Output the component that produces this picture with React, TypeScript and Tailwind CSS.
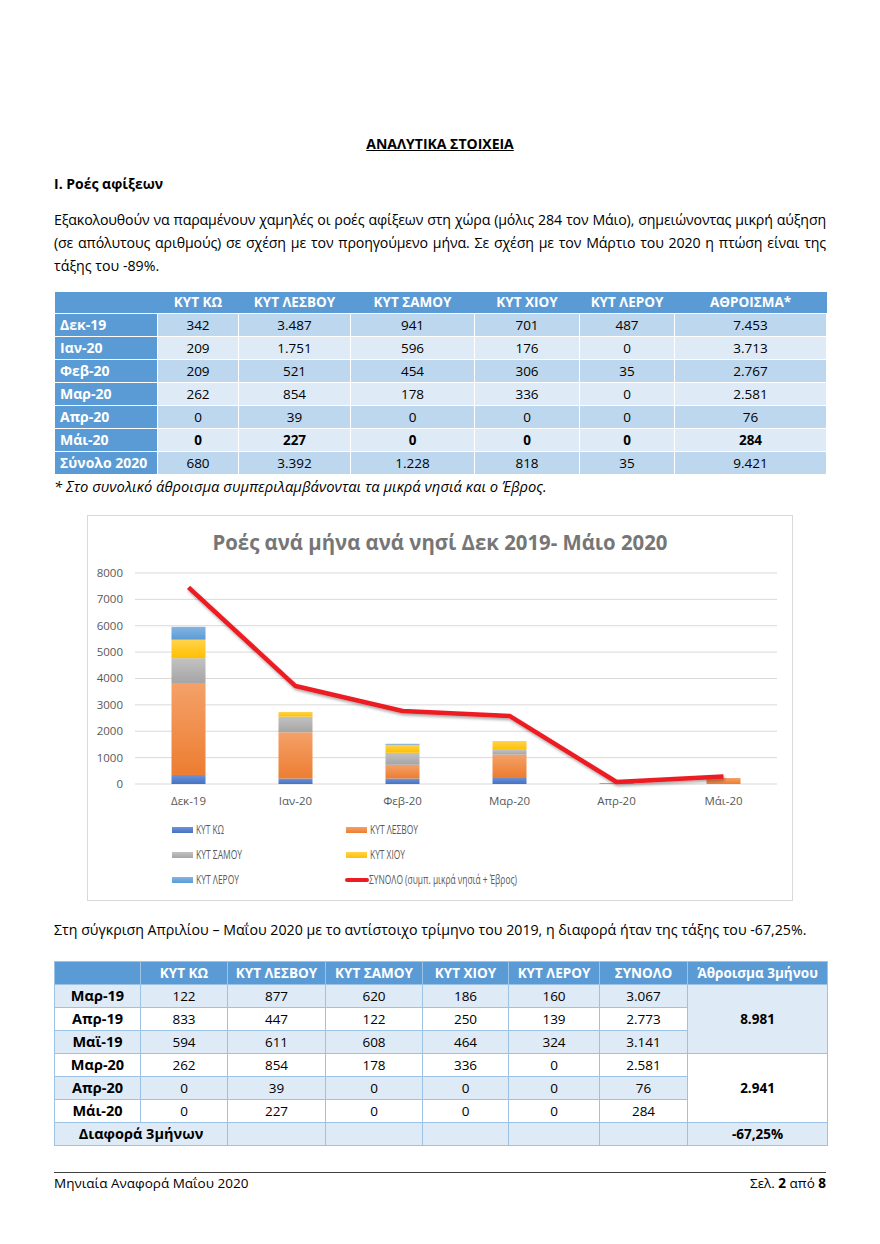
import React from "react";

const FONT = '"Open Sans", "Noto Sans", sans-serif';

const t1Head = ["", "ΚΥΤ ΚΩ", "ΚΥΤ ΛΕΣΒΟΥ", "ΚΥΤ ΣΑΜΟΥ", "ΚΥΤ ΧΙΟΥ", "ΚΥΤ ΛΕΡΟΥ", "ΑΘΡΟΙΣΜΑ*"];
const t1Widths = [103, 81, 112, 124, 105, 95, 152];
const t1Rows: { label: string; vals: string[]; bold?: boolean }[] = [
  { label: "Δεκ-19", vals: ["342", "3.487", "941", "701", "487", "7.453"] },
  { label: "Ιαν-20", vals: ["209", "1.751", "596", "176", "0", "3.713"] },
  { label: "Φεβ-20", vals: ["209", "521", "454", "306", "35", "2.767"] },
  { label: "Μαρ-20", vals: ["262", "854", "178", "336", "0", "2.581"] },
  { label: "Απρ-20", vals: ["0", "39", "0", "0", "0", "76"] },
  { label: "Μάι-20", vals: ["0", "227", "0", "0", "0", "284"], bold: true },
  { label: "Σύνολο 2020", vals: ["680", "3.392", "1.228", "818", "35", "9.421"] },
];

const t2Widths = [86, 87, 98, 97, 86, 91, 88, 140];
const t2Head = ["", "ΚΥΤ ΚΩ", "ΚΥΤ ΛΕΣΒΟΥ", "ΚΥΤ ΣΑΜΟΥ", "ΚΥΤ ΧΙΟΥ", "ΚΥΤ ΛΕΡΟΥ", "ΣΥΝΟΛΟ", "Άθροισμα 3μήνου"];
const t2Rows = [
  { label: "Μαρ-19", vals: ["122", "877", "620", "186", "160", "3.067"] },
  { label: "Απρ-19", vals: ["833", "447", "122", "250", "139", "2.773"] },
  { label: "Μαϊ-19", vals: ["594", "611", "608", "464", "324", "3.141"] },
  { label: "Μαρ-20", vals: ["262", "854", "178", "336", "0", "2.581"] },
  { label: "Απρ-20", vals: ["0", "39", "0", "0", "0", "76"] },
  { label: "Μάι-20", vals: ["0", "227", "0", "0", "0", "284"] },
];

const cats = ["Δεκ-19", "Ιαν-20", "Φεβ-20", "Μαρ-20", "Απρ-20", "Μάι-20"];
const stacks = [
  [342, 3487, 941, 701, 487],
  [209, 1751, 596, 176, 0],
  [209, 521, 454, 306, 35],
  [262, 854, 178, 336, 0],
  [0, 39, 0, 0, 0],
  [0, 227, 0, 0, 0],
];
const totals = [7453, 3713, 2767, 2581, 76, 284];
const colors = ["#4472c4", "#ed7d31", "#a5a5a5", "#ffc000", "#5b9bd5"];
const lights = ["#6f93d6", "#f4a169", "#c2c2c2", "#ffd34d", "#84b5e2"];

function Chart() {
  const y0 = 268;
  const k = 0.02638;
  const yOf = (v: number) => y0 - v * k;
  const cx = (i: number) => 100.5 + 107 * i;
  const grid = [0, 1000, 2000, 3000, 4000, 5000, 6000, 7000, 8000];
  const pts = totals.map((v, i) => `${cx(i)},${yOf(v)}`).join(" ");
  const legend = [
    { x: 84, y: 314, c: 0, label: "ΚΥΤ ΚΩ", w: 28 },
    { x: 258, y: 314, c: 1, label: "ΚΥΤ ΛΕΣΒΟΥ", w: 48 },
    { x: 84, y: 339, c: 2, label: "ΚΥΤ ΣΑΜΟΥ", w: 46 },
    { x: 258, y: 339, c: 3, label: "ΚΥΤ ΧΙΟΥ", w: 35 },
    { x: 84, y: 364, c: 4, label: "ΚΥΤ ΛΕΡΟΥ", w: 43 },
  ];
  return (
    <div className="mx-auto w-[706px] h-[386px] border border-[#d9d9d9] bg-white">
      <svg width="704" height="384" viewBox="0 0 704 384" style={{ fontFamily: FONT }}>
        <defs>
          {colors.map((c, i) => (
            <linearGradient key={i} id={`g${i}`} x1="0" y1="0" x2="0" y2="1">
              <stop offset="0" stopColor={lights[i]} />
              <stop offset="1" stopColor={c} />
            </linearGradient>
          ))}
          <filter id="sh" x="-10%" y="-10%" width="120%" height="130%">
            <feGaussianBlur in="SourceAlpha" stdDeviation="1.5" />
            <feOffset dx="1" dy="2" result="b" />
            <feComponentTransfer>
              <feFuncA type="linear" slope="0.35" />
            </feComponentTransfer>
            <feMerge>
              <feMergeNode />
              <feMergeNode in="SourceGraphic" />
            </feMerge>
          </filter>
        </defs>
        <text x="352" y="34" textAnchor="middle" fontSize="21" fontWeight="700" fill="#767676" textLength="455" lengthAdjust="spacingAndGlyphs">
          Ροές ανά μήνα ανά νησί Δεκ 2019- Μάιο 2020
        </text>
        {grid.map((g) => (
          <g key={g}>
            <line x1="47" x2="689" y1={yOf(g)} y2={yOf(g)} stroke="#d9d9d9" strokeWidth="1" />
            <text x="35" y={yOf(g) + 4} textAnchor="end" fontSize="11.5" fill="#595959">
              {g}
            </text>
          </g>
        ))}
        {stacks.map((s, i) => {
          let acc = 0;
          return (
            <g key={i}>
              {s.map((v, j) => {
                if (v === 0) return null;
                const yTop = yOf(acc + v);
                const yBot = yOf(acc);
                acc += v;
                return <rect key={j} x={cx(i) - 17} y={yTop} width="34" height={yBot - yTop} fill={`url(#g${j})`} />;
              })}
            </g>
          );
        })}
        {cats.map((c, i) => (
          <text key={c} x={cx(i)} y="289" textAnchor="middle" fontSize="11.5" fill="#595959">
            {c}
          </text>
        ))}
        <polyline points={pts} fill="none" stroke="#ec1c24" strokeWidth="4.5" strokeLinejoin="round" filter="url(#sh)" />
        {legend.map((l) => (
          <g key={l.label}>
            <rect x={l.x} y={l.y - 3} width="21" height="6" fill={`url(#g${l.c})`} />
            <text x={l.x + 24} y={l.y + 4} fontSize="12" fill="#595959" textLength={l.w} lengthAdjust="spacingAndGlyphs">
              {l.label}
            </text>
          </g>
        ))}
        <line x1="259" x2="279" y1="364" y2="364" stroke="#ec1c24" strokeWidth="4" strokeLinecap="round" />
        <text x="281" y="368" fontSize="12" fill="#595959" textLength="148" lengthAdjust="spacingAndGlyphs">
          ΣΥΝΟΛΟ (συμπ. μικρά νησιά + Έβρος)
        </text>
      </svg>
    </div>
  );
}

export default function App() {
  return (
    <div className="w-[880px] h-[1244px] bg-white text-black px-[54px] pt-[132px] text-[14px]" style={{ fontFamily: FONT }}>
      <div className="text-center font-bold underline leading-[23px] text-[14px]">ΑΝΑΛΥΤΙΚΑ ΣΤΟΙΧΕΙΑ</div>
      <div className="mt-[17px] font-bold leading-[23px] text-[14px]">Ι. Ροές αφίξεων</div>
      <div className="mt-[13px] leading-[23px] text-[14.2px]">
        <div className="text-justify [text-align-last:justify] tracking-[-0.15px]">
          Εξακολουθούν να παραμένουν χαμηλές οι ροές αφίξεων στη χώρα (μόλις 284 τον Μάιο), σημειώνοντας μικρή αύξηση
        </div>
        <div className="text-justify [text-align-last:justify] tracking-[-0.15px]">
          (σε απόλυτους αριθμούς) σε σχέση με τον προηγούμενο μήνα. Σε σχέση με τον Μάρτιο του 2020 η πτώση είναι της
        </div>
        <div>τάξης του -89%.</div>
      </div>

      <table className="mt-[15px] table-fixed border-collapse w-[772px] text-[13.5px]">
        <colgroup>
          {t1Widths.map((w, i) => (
            <col key={i} style={{ width: w }} />
          ))}
        </colgroup>
        <thead>
          <tr className="h-[21px] bg-[#5b9bd5] text-white font-bold">
            {t1Head.map((h, i) => (
              <th key={i} className="p-0 text-center font-bold leading-[21px]">
                {h}
              </th>
            ))}
          </tr>
        </thead>
        <tbody>
          {t1Rows.map((r, ri) => (
            <tr key={r.label} className={`h-[23px] ${ri % 2 === 0 ? "bg-[#bdd7ee]" : "bg-[#deebf7]"}`}>
              <td className="p-0 pl-[5px] bg-[#5b9bd5] text-white font-bold border border-white leading-[22px] text-[14px]">{r.label}</td>
              {r.vals.map((v, vi) => (
                <td key={vi} className={`p-0 text-center border border-white leading-[22px] ${r.bold ? "font-bold" : ""}`}>
                  {v}
                </td>
              ))}
            </tr>
          ))}
        </tbody>
      </table>
      <div className="leading-[23px] italic text-[14.8px]">* Στο συνολικό άθροισμα συμπεριλαμβάνονται τα μικρά νησιά και ο Έβρος.</div>

      <div className="mt-[17px]">
        <Chart />
      </div>

      <div className="mt-[17px] leading-[23px] text-[14.2px]">
        Στη σύγκριση Απριλίου – Μαΐου 2020 με το αντίστοιχο τρίμηνο του 2019, η διαφορά ήταν της τάξης του -67,25%.
      </div>

      <table className="mt-[20px] table-fixed border-collapse w-[773px] text-[13.5px]">
        <colgroup>
          {t2Widths.map((w, i) => (
            <col key={i} style={{ width: w }} />
          ))}
        </colgroup>
        <thead>
          <tr className="h-[23px] bg-[#5b9bd5] text-white">
            {t2Head.map((h, i) => (
              <th key={i} className="p-0 text-center font-bold border border-[#9cc2e5] leading-[22px] whitespace-nowrap">
                {h}
              </th>
            ))}
          </tr>
        </thead>
        <tbody>
          {t2Rows.map((r, ri) => (
            <tr key={r.label} className={`h-[23px] ${ri % 2 === 0 ? "bg-[#deeaf6]" : "bg-white"}`}>
              <td className="p-0 text-center font-bold border border-[#9cc2e5] leading-[22px] text-[14.5px]">{r.label}</td>
              {r.vals.map((v, vi) => (
                <td key={vi} className="p-0 text-center border border-[#9cc2e5] leading-[22px]">
                  {v}
                </td>
              ))}
              {ri === 0 && (
                <td rowSpan={3} className="p-0 text-center font-bold border border-[#9cc2e5] bg-[#deeaf6]">
                  8.981
                </td>
              )}
              {ri === 3 && (
                <td rowSpan={3} className="p-0 text-center font-bold border border-[#9cc2e5] bg-white">
                  2.941
                </td>
              )}
            </tr>
          ))}
          <tr className="h-[23px] bg-[#deeaf6]">
            <td colSpan={2} className="p-0 text-center font-bold border border-[#9cc2e5] leading-[22px] text-[14.5px]">
              Διαφορά 3μήνων
            </td>
            <td className="p-0 border border-[#9cc2e5]"></td>
            <td className="p-0 border border-[#9cc2e5]"></td>
            <td className="p-0 border border-[#9cc2e5]"></td>
            <td className="p-0 border border-[#9cc2e5]"></td>
            <td className="p-0 border border-[#9cc2e5]"></td>
            <td className="p-0 text-center font-bold border border-[#9cc2e5] leading-[22px]">-67,25%</td>
          </tr>
        </tbody>
      </table>

      <div className="mt-[26px] border-t border-[#404040] flex justify-between leading-[20px] text-[13.5px]">
        <span>Μηνιαία Αναφορά Μαΐου 2020</span>
        <span>
          Σελ. <b>2</b> από <b>8</b>
        </span>
      </div>
    </div>
  );
}
